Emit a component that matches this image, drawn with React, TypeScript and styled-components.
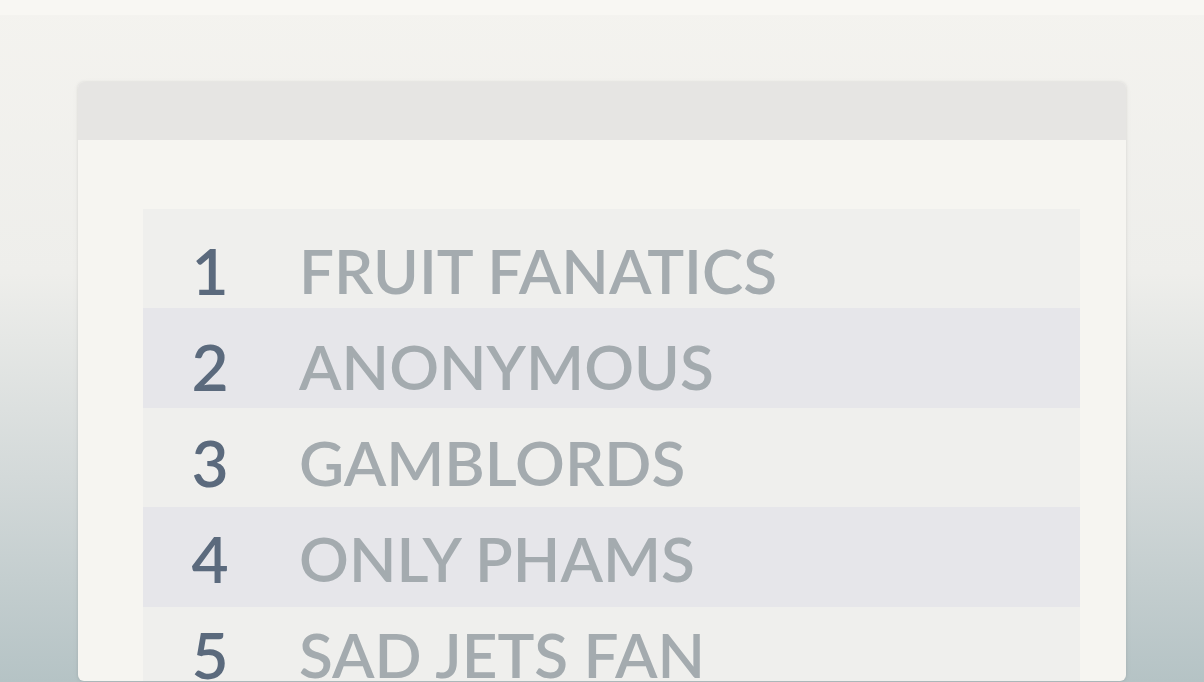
import styled, { createGlobalStyle } from 'styled-components';

const GlobalStyle = createGlobalStyle`
  html, body {
    margin: 0;
    padding: 0;
    height: 100%;
    overflow: hidden;
  }
  body {
    font-family: Lato, "Open Sans", sans-serif;
  }
`;

const teams = ['FRUIT FANATICS', 'ANONYMOUS', 'GAMBLORDS', 'ONLY PHAMS', 'SAD JETS FAN'];

function App() {
  return (
    <Page>
      <GlobalStyle />
      <TopStrip />
      <Stage>
        <Card>
          <CardHeader />
          <CardBody>
            <Board>
              {teams.map((name, i) => (
                <Row key={name}>
                  <Rank>{i + 1}</Rank>
                  <Team>{name}</Team>
                </Row>
              ))}
            </Board>
          </CardBody>
        </Card>
      </Stage>
    </Page>
  );
}

export default App;

const Page = styled.div`
  width: 1204px;
  height: 682px;
  display: flex;
  flex-direction: column;
  background: linear-gradient(180deg, #f4f3ef 0%, #eeeeeb 40%, #d3d9d9 70%, #b5c3c5 100%);
  overflow: hidden;
`;

const TopStrip = styled.div`
  height: 15px;
  background: #f8f7f3;
  flex-shrink: 0;
`;

const Stage = styled.div`
  flex: 1;
  padding: 67px 78px 0 78px;
`;

const Card = styled.div`
  height: 599px;
  background: #f6f5f1;
  border-radius: 6px;
  overflow: hidden;
  box-shadow: 0 0 3px rgba(0, 0, 0, 0.08), 0 1px 6px rgba(0, 0, 0, 0.05);
  display: flex;
  flex-direction: column;
`;

const CardHeader = styled.div`
  height: 58px;
  background: #e6e5e3;
  flex-shrink: 0;
`;

const CardBody = styled.div`
  flex: 1;
  display: flex;
  padding: 69px 46px 0 65px;
`;

/* striped board: stripes are 99.5px, the text rows run a little tighter */
const Board = styled.div`
  flex: 1;
  display: flex;
  flex-direction: column;
  background: repeating-linear-gradient(
    180deg,
    #efefed 0px,
    #efefed 99.5px,
    #e6e6ea 99.5px,
    #e6e6ea 199px
  );
`;

const Row = styled.div`
  height: 96px;
  flex-shrink: 0;
  display: flex;
  align-items: center;
`;

const Rank = styled.div`
  width: 134px;
  text-align: center;
  font-size: 64px;
  font-weight: 600;
  color: #5b6a7d;
  padding-top: 26px;
  flex-shrink: 0;
`;

const Team = styled.div`
  padding-left: 22px;
  font-size: 62px;
  font-weight: 600;
  color: #a4abaf;
  padding-top: 26px;
`;
